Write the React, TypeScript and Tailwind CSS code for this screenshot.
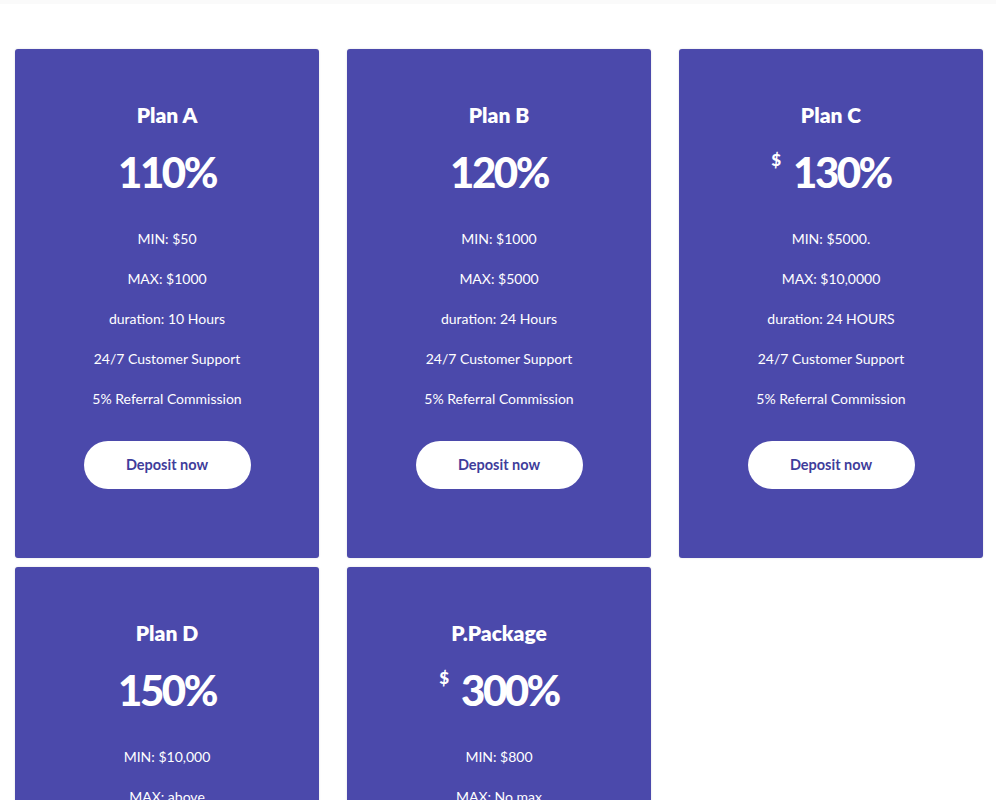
import React from 'react';

type Plan = {
  name: string;
  rate: string;
  dollar?: boolean;
  items: string[];
};

const plans: Plan[] = [
  {
    name: 'Plan A',
    rate: '110%',
    items: ['MIN: $50', 'MAX: $1000', 'duration: 10 Hours', '24/7 Customer Support', '5% Referral Commission'],
  },
  {
    name: 'Plan B',
    rate: '120%',
    items: ['MIN: $1000', 'MAX: $5000', 'duration: 24 Hours', '24/7 Customer Support', '5% Referral Commission'],
  },
  {
    name: 'Plan C',
    rate: '130%',
    dollar: true,
    items: ['MIN: $5000.', 'MAX: $10,0000', 'duration: 24 HOURS', '24/7 Customer Support', '5% Referral Commission'],
  },
  {
    name: 'Plan D',
    rate: '150%',
    items: ['MIN: $10,000', 'MAX: above', 'duration: 48 Hours', '24/7 Customer Support', '5% Referral Commission'],
  },
  {
    name: 'P.Package',
    rate: '300%',
    dollar: true,
    items: ['MIN: $800', 'MAX: No max', 'duration: 24 Hours', '24/7 Customer Support', '5% Referral Commission'],
  },
];

const PlanCard = ({ plan }: { plan: Plan }) => {
  return (
    <div className="flex flex-col items-center rounded-[3px] bg-[#4b49ab] pt-[52px] pb-[69px] text-white shadow-[0_0_2px_rgba(0,0,0,0.15)]">
      <h3 className="text-[21px] leading-[28px] font-extrabold font-['Lato','Inter',sans-serif]">{plan.name}</h3>
      <div className="mt-[19px] flex items-start font-['Lato','Inter',sans-serif] font-black">
        {plan.dollar && <span className="mr-[12px] mt-[2px] text-[17px] leading-[20px]">$</span>}
        <span className="text-[42px] leading-[48px] tracking-[-2.5px]">{plan.rate}</span>
      </div>
      <ul className="mt-[33px] flex flex-col items-center gap-[20px] font-['Lato','Open_Sans',sans-serif] text-[14px] leading-[20px]">
        {plan.items.map((item) => (
          <li key={item}>{item}</li>
        ))}
      </ul>
      <button className="mt-[32px] h-[48px] w-[167px] rounded-full bg-white font-['Lato','Open_Sans',sans-serif] text-[14.5px] font-bold text-[#3f3d9b]">
        Deposit now
      </button>
    </div>
  );
};

export default function App() {
  return (
    <div className="min-h-screen bg-white">
      <div className="h-[4px] bg-[#fafafa]" />
      <div className="grid grid-cols-[304px_304px_304px] gap-x-[28px] gap-y-[9px] pl-[15px] pt-[45px]">
        {plans.map((plan) => (
          <PlanCard key={plan.name} plan={plan} />
        ))}
      </div>
    </div>
  );
}
